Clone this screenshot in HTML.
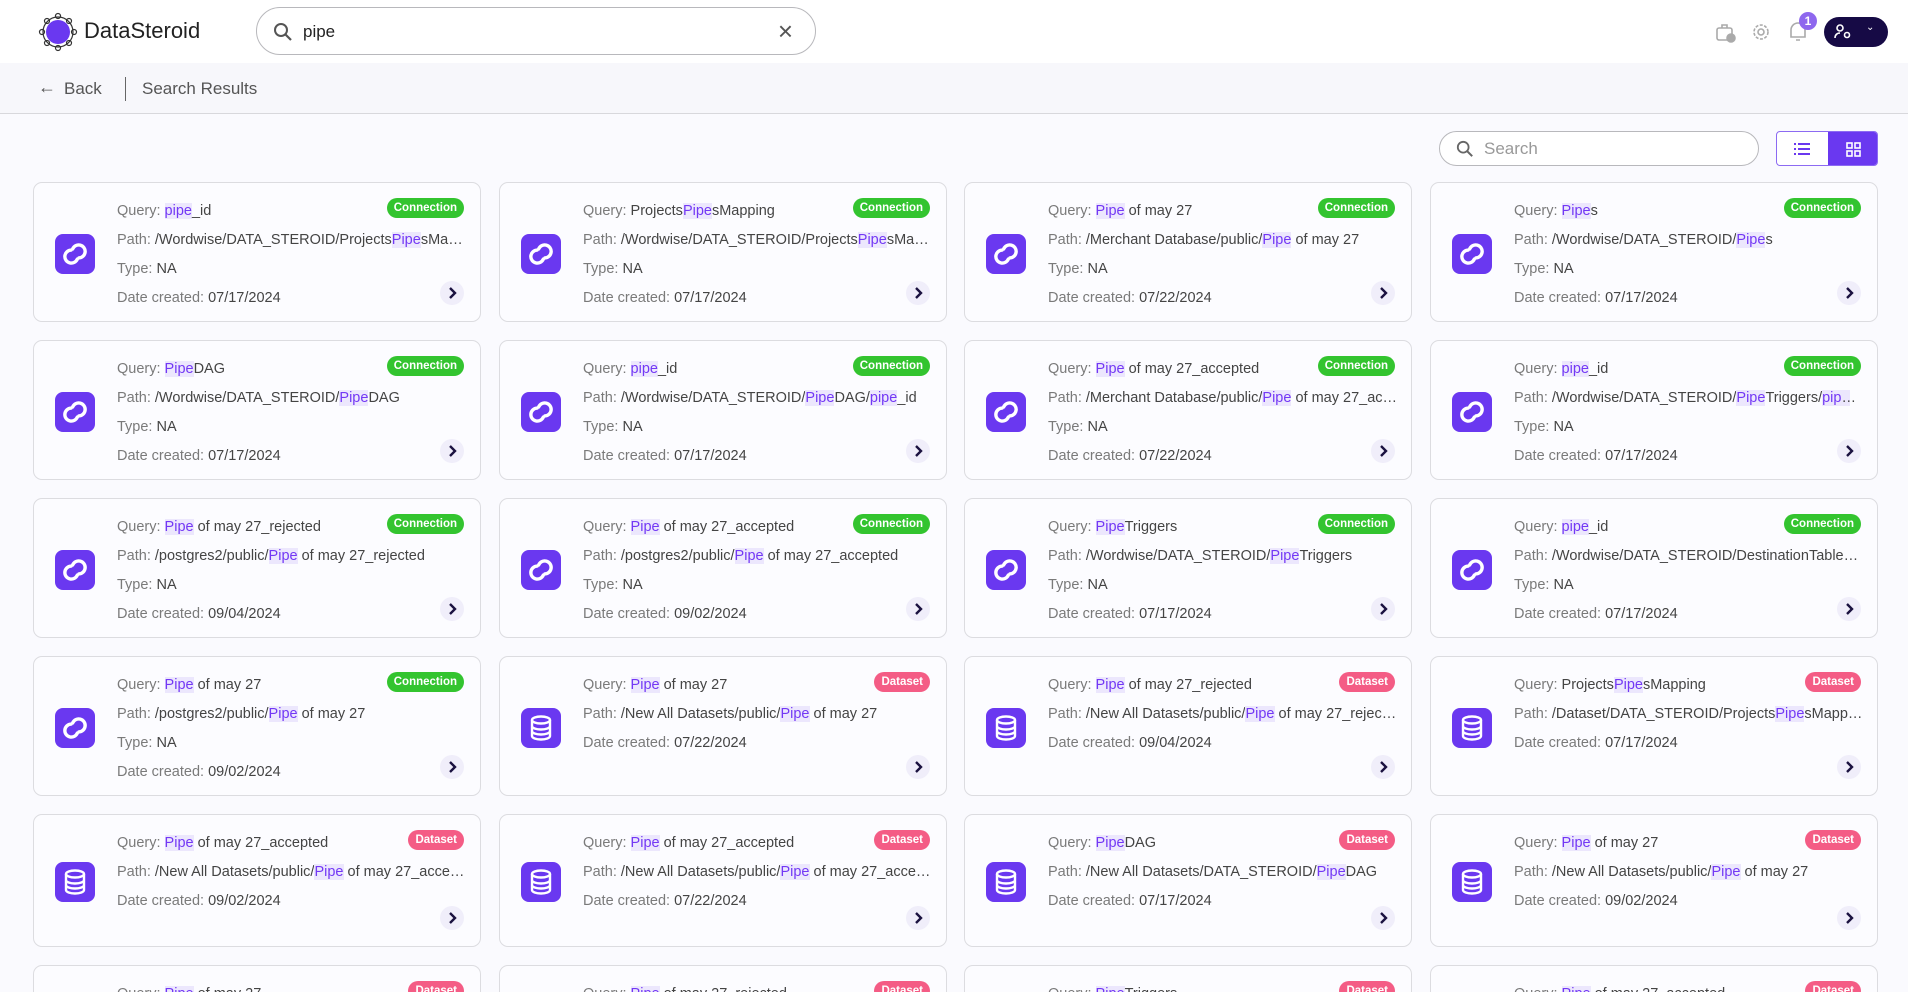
<!DOCTYPE html>
<html style="width:1908px;height:992px;overflow:hidden"><head><meta charset="utf-8"><style>
*{box-sizing:border-box;margin:0;padding:0}
body{width:1908px;height:992px;overflow:hidden;background:#fafafe;font-family:"Liberation Sans",sans-serif;position:relative}
.hdr{position:absolute;left:0;top:0;width:1908px;height:63px;background:#fff}
.sub{position:absolute;left:0;top:63px;width:1908px;height:51px;background:#f7f7fb;border-bottom:1px solid #d8d8dc}
.card{position:absolute;width:448px;height:140px;background:#fcfcff;border:1px solid #dcdce0;border-radius:9px}
.card .ic{position:absolute;left:21px;top:51px;width:40px;height:40px;border-radius:8px;background:#6a38f0}
.card .ln{position:absolute;left:83px;width:300px;white-space:nowrap;overflow:hidden;text-overflow:ellipsis;font-size:14.5px;line-height:20px;color:#444}
.card .ln.p{width:350px}
.card .ln b{font-weight:normal;color:#7a7a7a}
.card i{font-style:normal;background:#ece7fd;color:#7338f5}
.l1{top:18px}.l2{top:47px}.l3{top:76px}.l4{top:105px}
.bd{position:absolute;right:16px;top:15px;height:20px;border-radius:10px;padding:0 7px;font-size:11.5px;font-weight:bold;line-height:20px;color:#fff}
.bc{background:#33c42f}.bx{background:#f45c85}
.ar{position:absolute;right:16px;bottom:16px;width:24px;height:24px;border-radius:50%;background:#f0eefa}
</style></head><body>
<div class="hdr">
<svg style="position:absolute;left:38px;top:12px" width="40" height="40" viewBox="0 0 40 40"><circle cx="20" cy="20" r="12" fill="#6a38f0"/><g fill="none" stroke="#333" stroke-width="1.2"><circle cx="20" cy="4" r="2.5"/><circle cx="20" cy="36" r="2.5"/><circle cx="4" cy="20" r="2.5"/><circle cx="36" cy="20" r="2.5"/><circle cx="9" cy="9" r="2.5"/><circle cx="31" cy="9" r="2.5"/><circle cx="9" cy="31" r="2.5"/><circle cx="31" cy="31" r="2.5"/><circle cx="20" cy="20" r="15"/></g></svg>
<div style="position:absolute;left:84px;top:18px;font-size:22px;color:#222">DataSteroid</div>
<div style="position:absolute;left:256px;top:7px;width:560px;height:48px;border:1px solid #b8b8bc;border-radius:24px">
<svg style="position:absolute;left:16px;top:14px" width="20" height="20" viewBox="0 0 20 20"><circle cx="8" cy="8" r="6" fill="none" stroke="#555" stroke-width="2"/><path d="M12.5 12.5L18 18" stroke="#555" stroke-width="2.2"/></svg>
<div style="position:absolute;left:46px;top:14px;font-size:17px;color:#222">pipe</div>
<div style="position:absolute;right:22px;top:8px;font-size:26px;color:#555">×</div>
</div>
<svg style="position:absolute;left:1715px;top:22px" width="22" height="22" viewBox="0 0 22 22" fill="none" stroke="#aaa" stroke-width="1.6"><rect x="2" y="6" width="15" height="12" rx="2"/><path d="M7 6V3h5v3"/><circle cx="16" cy="16" r="4" fill="#aaa"/></svg>
<svg style="position:absolute;left:1751px;top:22px" width="20" height="20" viewBox="0 0 20 20" fill="none" stroke="#aaa" stroke-width="1.6"><circle cx="10" cy="10" r="3"/><circle cx="10" cy="10" r="7" stroke-dasharray="3 1.5"/></svg>
<svg style="position:absolute;left:1788px;top:20px" width="20" height="24" viewBox="0 0 20 24" fill="none" stroke="#aaa" stroke-width="1.6"><path d="M3 17V10a7 7 0 0 1 14 0v7zM8 20h4"/></svg>
<div style="position:absolute;left:1799px;top:12px;width:18px;height:18px;border-radius:50%;background:#8e67ee;color:#fff;font-size:12px;font-weight:bold;text-align:center;line-height:18px">1</div>
<div style="position:absolute;left:1824px;top:17px;width:64px;height:30px;border-radius:15px;background:#160a45">
<svg style="position:absolute;left:10px;top:7px" width="18" height="16" viewBox="0 0 18 16" fill="none" stroke="#fff" stroke-width="1.6"><circle cx="6" cy="4" r="3"/><path d="M1 14c0-3 2-5 5-5"/><circle cx="13" cy="11" r="2.5"/></svg>
<div style="position:absolute;left:42px;top:5px;color:#fff;font-size:10px">⌄</div>
</div>
</div>
<div class="sub">
<div style="position:absolute;left:38px;top:14px;font-size:18px;color:#555">←</div>
<div style="position:absolute;left:64px;top:16px;font-size:17px;color:#555">Back</div>
<div style="position:absolute;left:125px;top:14px;width:1px;height:24px;background:#666"></div>
<div style="position:absolute;left:142px;top:16px;font-size:17px;color:#555">Search Results</div>
</div>
<div style="position:absolute;left:1439px;top:131px;width:320px;height:35px;border:1px solid #b8b8bc;border-radius:18px;background:#fff">
<svg style="position:absolute;left:16px;top:8px" width="18" height="18" viewBox="0 0 20 20"><circle cx="8" cy="8" r="6" fill="none" stroke="#666" stroke-width="2"/><path d="M12.5 12.5L18 18" stroke="#666" stroke-width="2.2"/></svg>
<div style="position:absolute;left:44px;top:7px;font-size:17px;color:#999">Search</div>
</div>
<div style="position:absolute;left:1776px;top:131px;width:102px;height:35px;border:1px solid #8c6af2;border-radius:4px;background:#fff;overflow:hidden">
<div style="position:absolute;left:51px;top:0;width:51px;height:35px;background:#6a38f0"></div>
<svg style="position:absolute;left:17px;top:10px" width="16" height="14" viewBox="0 0 16 14" fill="#6a38f0"><rect x="0" y="1" width="2" height="2"/><rect x="4" y="1" width="12" height="2"/><rect x="0" y="6" width="2" height="2"/><rect x="4" y="6" width="12" height="2"/><rect x="0" y="11" width="2" height="2"/><rect x="4" y="11" width="12" height="2"/></svg>
<svg style="position:absolute;left:69px;top:10px" width="15" height="15" viewBox="0 0 15 15" fill="none" stroke="#fff" stroke-width="1.6"><rect x="1" y="1" width="5" height="5"/><rect x="9" y="1" width="5" height="5"/><rect x="1" y="9" width="5" height="5"/><rect x="9" y="9" width="5" height="5"/></svg>
</div>

<svg width="0" height="0" style="position:absolute"><defs>
<symbol id="lk" viewBox="0 0 40 40"><g fill="none" stroke="#fff" stroke-width="3.4" stroke-linecap="round" transform="rotate(-35 20 20)"><path d="M19 14.5a6.5 6.5 0 1 0 0 11"/><path d="M21 25.5a6.5 6.5 0 1 0 0-11"/></g></symbol>
<symbol id="db" viewBox="0 0 40 40"><g fill="none" stroke="#fff" stroke-width="2.4"><ellipse cx="20" cy="12" rx="9" ry="3.5"/><path d="M11 12v16c0 2 4 3.5 9 3.5s9-1.5 9-3.5V12M11 18c0 2 4 3.5 9 3.5s9-1.5 9-3.5M11 23c0 2 4 3.5 9 3.5s9-1.5 9-3.5"/></g></symbol>
<symbol id="ch" viewBox="0 0 24 24"><path d="M10 7l5 5-5 5" fill="none" stroke="#1b1240" stroke-width="2.4"/></symbol>
</defs></svg>

<!-- Row 1 -->
<div class="card" style="left:33px;top:182px"><div class="ic"><svg width="40" height="40"><use href="#lk"/></svg></div><div class="ln l1"><b>Query: </b><i>pipe</i>_id</div><div class="bd bc">Connection</div><div class="ln p l2"><b>Path: </b>/Wordwise/DATA_STEROID/Projects<i>Pipe</i>sMapping</div><div class="ln l3"><b>Type: </b>NA</div><div class="ln l4"><b>Date created: </b>07/17/2024</div><svg class="ar"><use href="#ch"/></svg></div>
<div class="card" style="left:499px;top:182px"><div class="ic"><svg width="40" height="40"><use href="#lk"/></svg></div><div class="ln l1"><b>Query: </b>Projects<i>Pipe</i>sMapping</div><div class="bd bc">Connection</div><div class="ln p l2"><b>Path: </b>/Wordwise/DATA_STEROID/Projects<i>Pipe</i>sMapping</div><div class="ln l3"><b>Type: </b>NA</div><div class="ln l4"><b>Date created: </b>07/17/2024</div><svg class="ar"><use href="#ch"/></svg></div>
<div class="card" style="left:964px;top:182px"><div class="ic"><svg width="40" height="40"><use href="#lk"/></svg></div><div class="ln l1"><b>Query: </b><i>Pipe</i> of may 27</div><div class="bd bc">Connection</div><div class="ln p l2"><b>Path: </b>/Merchant Database/public/<i>Pipe</i> of may 27</div><div class="ln l3"><b>Type: </b>NA</div><div class="ln l4"><b>Date created: </b>07/22/2024</div><svg class="ar"><use href="#ch"/></svg></div>
<div class="card" style="left:1430px;top:182px"><div class="ic"><svg width="40" height="40"><use href="#lk"/></svg></div><div class="ln l1"><b>Query: </b><i>Pipe</i>s</div><div class="bd bc">Connection</div><div class="ln p l2"><b>Path: </b>/Wordwise/DATA_STEROID/<i>Pipe</i>s</div><div class="ln l3"><b>Type: </b>NA</div><div class="ln l4"><b>Date created: </b>07/17/2024</div><svg class="ar"><use href="#ch"/></svg></div>
<!-- Row 2 -->
<div class="card" style="left:33px;top:340px"><div class="ic"><svg width="40" height="40"><use href="#lk"/></svg></div><div class="ln l1"><b>Query: </b><i>Pipe</i>DAG</div><div class="bd bc">Connection</div><div class="ln p l2"><b>Path: </b>/Wordwise/DATA_STEROID/<i>Pipe</i>DAG</div><div class="ln l3"><b>Type: </b>NA</div><div class="ln l4"><b>Date created: </b>07/17/2024</div><svg class="ar"><use href="#ch"/></svg></div>
<div class="card" style="left:499px;top:340px"><div class="ic"><svg width="40" height="40"><use href="#lk"/></svg></div><div class="ln l1"><b>Query: </b><i>pipe</i>_id</div><div class="bd bc">Connection</div><div class="ln p l2"><b>Path: </b>/Wordwise/DATA_STEROID/<i>Pipe</i>DAG/<i>pipe</i>_id</div><div class="ln l3"><b>Type: </b>NA</div><div class="ln l4"><b>Date created: </b>07/17/2024</div><svg class="ar"><use href="#ch"/></svg></div>
<div class="card" style="left:964px;top:340px"><div class="ic"><svg width="40" height="40"><use href="#lk"/></svg></div><div class="ln l1"><b>Query: </b><i>Pipe</i> of may 27_accepted</div><div class="bd bc">Connection</div><div class="ln p l2"><b>Path: </b>/Merchant Database/public/<i>Pipe</i> of may 27_accepted</div><div class="ln l3"><b>Type: </b>NA</div><div class="ln l4"><b>Date created: </b>07/22/2024</div><svg class="ar"><use href="#ch"/></svg></div>
<div class="card" style="left:1430px;top:340px"><div class="ic"><svg width="40" height="40"><use href="#lk"/></svg></div><div class="ln l1"><b>Query: </b><i>pipe</i>_id</div><div class="bd bc">Connection</div><div class="ln p l2"><b>Path: </b>/Wordwise/DATA_STEROID/<i>Pipe</i>Triggers/<i>pipe</i>_id</div><div class="ln l3"><b>Type: </b>NA</div><div class="ln l4"><b>Date created: </b>07/17/2024</div><svg class="ar"><use href="#ch"/></svg></div>
<!-- Row 3 -->
<div class="card" style="left:33px;top:498px"><div class="ic"><svg width="40" height="40"><use href="#lk"/></svg></div><div class="ln l1"><b>Query: </b><i>Pipe</i> of may 27_rejected</div><div class="bd bc">Connection</div><div class="ln p l2"><b>Path: </b>/postgres2/public/<i>Pipe</i> of may 27_rejected</div><div class="ln l3"><b>Type: </b>NA</div><div class="ln l4"><b>Date created: </b>09/04/2024</div><svg class="ar"><use href="#ch"/></svg></div>
<div class="card" style="left:499px;top:498px"><div class="ic"><svg width="40" height="40"><use href="#lk"/></svg></div><div class="ln l1"><b>Query: </b><i>Pipe</i> of may 27_accepted</div><div class="bd bc">Connection</div><div class="ln p l2"><b>Path: </b>/postgres2/public/<i>Pipe</i> of may 27_accepted</div><div class="ln l3"><b>Type: </b>NA</div><div class="ln l4"><b>Date created: </b>09/02/2024</div><svg class="ar"><use href="#ch"/></svg></div>
<div class="card" style="left:964px;top:498px"><div class="ic"><svg width="40" height="40"><use href="#lk"/></svg></div><div class="ln l1"><b>Query: </b><i>Pipe</i>Triggers</div><div class="bd bc">Connection</div><div class="ln p l2"><b>Path: </b>/Wordwise/DATA_STEROID/<i>Pipe</i>Triggers</div><div class="ln l3"><b>Type: </b>NA</div><div class="ln l4"><b>Date created: </b>07/17/2024</div><svg class="ar"><use href="#ch"/></svg></div>
<div class="card" style="left:1430px;top:498px"><div class="ic"><svg width="40" height="40"><use href="#lk"/></svg></div><div class="ln l1"><b>Query: </b><i>pipe</i>_id</div><div class="bd bc">Connection</div><div class="ln p l2"><b>Path: </b>/Wordwise/DATA_STEROID/DestinationTables/pipe_id</div><div class="ln l3"><b>Type: </b>NA</div><div class="ln l4"><b>Date created: </b>07/17/2024</div><svg class="ar"><use href="#ch"/></svg></div>
<!-- Row 4 -->
<div class="card" style="left:33px;top:656px"><div class="ic"><svg width="40" height="40"><use href="#lk"/></svg></div><div class="ln l1"><b>Query: </b><i>Pipe</i> of may 27</div><div class="bd bc">Connection</div><div class="ln p l2"><b>Path: </b>/postgres2/public/<i>Pipe</i> of may 27</div><div class="ln l3"><b>Type: </b>NA</div><div class="ln l4"><b>Date created: </b>09/02/2024</div><svg class="ar"><use href="#ch"/></svg></div>
<div class="card" style="left:499px;top:656px"><div class="ic"><svg width="40" height="40"><use href="#db"/></svg></div><div class="ln l1"><b>Query: </b><i>Pipe</i> of may 27</div><div class="bd bx">Dataset</div><div class="ln p l2"><b>Path: </b>/New All Datasets/public/<i>Pipe</i> of may 27</div><div class="ln l3"><b>Date created: </b>07/22/2024</div><svg class="ar"><use href="#ch"/></svg></div>
<div class="card" style="left:964px;top:656px"><div class="ic"><svg width="40" height="40"><use href="#db"/></svg></div><div class="ln l1"><b>Query: </b><i>Pipe</i> of may 27_rejected</div><div class="bd bx">Dataset</div><div class="ln p l2"><b>Path: </b>/New All Datasets/public/<i>Pipe</i> of may 27_rejected</div><div class="ln l3"><b>Date created: </b>09/04/2024</div><svg class="ar"><use href="#ch"/></svg></div>
<div class="card" style="left:1430px;top:656px"><div class="ic"><svg width="40" height="40"><use href="#db"/></svg></div><div class="ln l1"><b>Query: </b>Projects<i>Pipe</i>sMapping</div><div class="bd bx">Dataset</div><div class="ln p l2"><b>Path: </b>/Dataset/DATA_STEROID/Projects<i>Pipe</i>sMapping</div><div class="ln l3"><b>Date created: </b>07/17/2024</div><svg class="ar"><use href="#ch"/></svg></div>
<!-- Row 5 -->
<div class="card" style="left:33px;top:814px;height:133px"><div class="ic" style="top:47px"><svg width="40" height="40"><use href="#db"/></svg></div><div class="ln l1"><b>Query: </b><i>Pipe</i> of may 27_accepted</div><div class="bd bx">Dataset</div><div class="ln p l2"><b>Path: </b>/New All Datasets/public/<i>Pipe</i> of may 27_accepted</div><div class="ln l3"><b>Date created: </b>09/02/2024</div><svg class="ar"><use href="#ch"/></svg></div>
<div class="card" style="left:499px;top:814px;height:133px"><div class="ic" style="top:47px"><svg width="40" height="40"><use href="#db"/></svg></div><div class="ln l1"><b>Query: </b><i>Pipe</i> of may 27_accepted</div><div class="bd bx">Dataset</div><div class="ln p l2"><b>Path: </b>/New All Datasets/public/<i>Pipe</i> of may 27_accepted</div><div class="ln l3"><b>Date created: </b>07/22/2024</div><svg class="ar"><use href="#ch"/></svg></div>
<div class="card" style="left:964px;top:814px;height:133px"><div class="ic" style="top:47px"><svg width="40" height="40"><use href="#db"/></svg></div><div class="ln l1"><b>Query: </b><i>Pipe</i>DAG</div><div class="bd bx">Dataset</div><div class="ln p l2"><b>Path: </b>/New All Datasets/DATA_STEROID/<i>Pipe</i>DAG</div><div class="ln l3"><b>Date created: </b>07/17/2024</div><svg class="ar"><use href="#ch"/></svg></div>
<div class="card" style="left:1430px;top:814px;height:133px"><div class="ic" style="top:47px"><svg width="40" height="40"><use href="#db"/></svg></div><div class="ln l1"><b>Query: </b><i>Pipe</i> of may 27</div><div class="bd bx">Dataset</div><div class="ln p l2"><b>Path: </b>/New All Datasets/public/<i>Pipe</i> of may 27</div><div class="ln l3"><b>Date created: </b>09/02/2024</div><svg class="ar"><use href="#ch"/></svg></div>
<!-- Row 6 (cut off) -->
<div class="card" style="left:33px;top:965px;height:40px;border-bottom:none;border-radius:9px 9px 0 0"><div class="ln l1"><b>Query: </b><i>Pipe</i> of may 27</div><div class="bd bx">Dataset</div></div>
<div class="card" style="left:499px;top:965px;height:40px;border-bottom:none;border-radius:9px 9px 0 0"><div class="ln l1"><b>Query: </b><i>Pipe</i> of may 27_rejected</div><div class="bd bx">Dataset</div></div>
<div class="card" style="left:964px;top:965px;height:40px;border-bottom:none;border-radius:9px 9px 0 0"><div class="ln l1"><b>Query: </b><i>Pipe</i>Triggers</div><div class="bd bx">Dataset</div></div>
<div class="card" style="left:1430px;top:965px;height:40px;border-bottom:none;border-radius:9px 9px 0 0"><div class="ln l1"><b>Query: </b><i>Pipe</i> of may 27_accepted</div><div class="bd bx">Dataset</div></div>
</body></html>
